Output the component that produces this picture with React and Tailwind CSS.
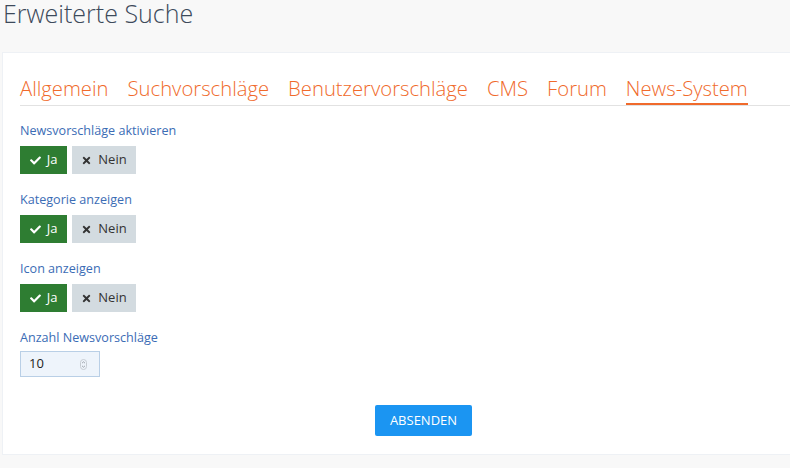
import { FaCheck, FaTimes } from 'react-icons/fa';

const TABS = ['Allgemein', 'Suchvorschläge', 'Benutzervorschläge', 'CMS', 'Forum', 'News-System'];

const FIELDS = ['Newsvorschläge aktivieren', 'Kategorie anzeigen', 'Icon anzeigen'];

function Toggle() {
  return (
    <div className="flex gap-[5px]">
      <button className="h-[28px] w-[47px] flex items-center justify-center gap-[6px] bg-[#2e7d32] text-white text-[13px]">
        <FaCheck className="text-[11px]" />
        <span>Ja</span>
      </button>
      <button className="h-[28px] w-[64px] flex items-center justify-center gap-[6px] bg-[#d3dbe0] text-[#333] text-[13px]">
        <FaTimes className="text-[11px]" />
        <span>Nein</span>
      </button>
    </div>
  );
}

export default function App() {
  return (
    <div
      className="w-[790px] h-[468px] bg-[#f8f8f8]"
      style={{ fontFamily: '"Open Sans", "Noto Sans", sans-serif' }}
    >
      <div className="h-[52px] pl-[3px] flex items-start">
        <h1 className="text-[25px] leading-[34px] -mt-[4px] font-light text-[#3d4a5b]">Erweiterte Suche</h1>
      </div>

      <div className="overflow-hidden">
        <div className="ml-[2px] w-[843px] bg-white border border-[#eef1f5] pt-[21px] px-[17px] pb-[18px]">
          <div className="flex gap-[19px] border-b border-[#e2e2e2]">
            {TABS.map((t) => (
              <div
                key={t}
                className={
                  'text-[20.25px] font-light leading-[28px] pb-[1px] border-b-2 text-[#f06a2b] ' +
                  (t === 'News-System' ? 'border-[#f06a2b]' : 'border-transparent')
                }
              >
                {t}
              </div>
            ))}
          </div>

          <div className="pt-[16px]">
            {FIELDS.map((f) => (
              <div key={f} className="mb-[17px]">
                <label className="block text-[12.6px] leading-[18px] text-[#3b6cb5] mb-[6px]">{f}</label>
                <Toggle />
              </div>
            ))}

            <div>
              <label className="block text-[12.6px] leading-[18px] text-[#3b6cb5] mb-[4px]">Anzahl Newsvorschläge</label>
              <div className="w-[80px] h-[26px] flex items-center justify-between pl-[8px] pr-[12px] bg-[#eef4fb] border border-[#b9cfe6] text-[13px] text-[#222]">
                <span>10</span>
                <svg width="7" height="11" viewBox="0 0 7 11" fill="none">
                  <rect x="0.5" y="0.5" width="6" height="10" rx="3" stroke="#c6ccd2" />
                  <path d="M2 4.2 L3.5 2.8 L5 4.2" stroke="#8a9098" strokeWidth="0.8" />
                  <path d="M2 6.8 L3.5 8.2 L5 6.8" stroke="#8a9098" strokeWidth="0.8" />
                </svg>
              </div>
            </div>

            <div className="flex justify-center pt-[28px]">
              <button className="h-[31px] w-[97px] rounded-[2px] bg-[#1b95f2] text-white text-[13px] uppercase">
                Absenden
              </button>
            </div>
          </div>
        </div>
      </div>
    </div>
  );
}
